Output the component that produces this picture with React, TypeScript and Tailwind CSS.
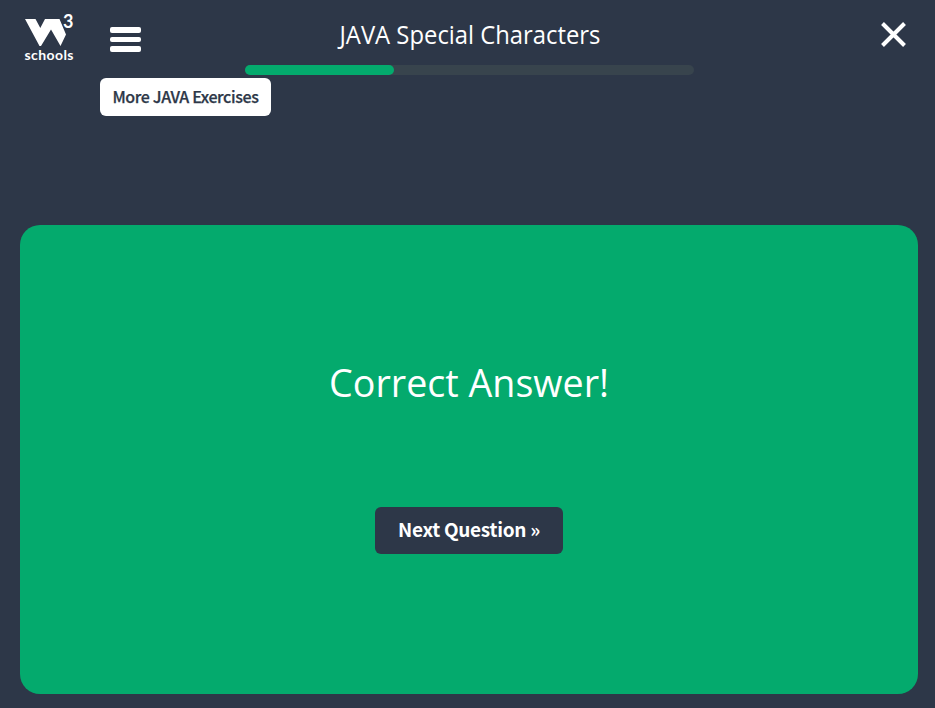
export default function App() {
  return (
    <main className="flex h-[708px] w-[935px] flex-col overflow-hidden bg-[#2d3748] text-white">
      <header className="flex h-[225px] items-start">
        <svg className="ml-[20px] mt-[10px] h-[55px] w-[60px] shrink-0" viewBox="20 10 60 55" fill="white">
          <path d="M25 19H35.5L40.3 28L45 19H59.5L66 34.5L60.5 46L51 29.5L41 46H39.5Z" />
          <text x="63" y="28" fontSize="18" fontWeight="700" fontFamily="Lato, sans-serif">3</text>
          <text x="24.5" y="60" fontSize="14" fontWeight="700" fontFamily="Lato, sans-serif" textLength="49">schools</text>
        </svg>
        <div className="mt-[27px] ml-[20px] flex w-[145px] shrink-0 flex-col">
          <button aria-label="Menu" className="ml-[10px] flex w-[31px] flex-col gap-[4px]">
            <span className="h-[5.5px] w-full rounded-[2px] bg-white" />
            <span className="h-[5.5px] w-full rounded-[2px] bg-white" />
            <span className="h-[5.5px] w-full rounded-[2px] bg-white" />
          </button>
          <a className="mt-[26.5px] flex h-[38px] w-[171px] shrink-0 items-center justify-center rounded-[6px] bg-white pb-[2px] font-['Noto_Sans_CJK_SC',sans-serif] text-[16px] font-medium tracking-[-0.37px] whitespace-nowrap text-[#2d3748] [-webkit-text-stroke:0.25px_#2d3748]">More JAVA Exercises</a>
        </div>
        <div className="flex w-[449px] shrink-0 flex-col items-center">
          <h1 className="mt-[16px] h-[49px] scale-x-[0.953] font-['Open_Sans',sans-serif] text-[25px] leading-[37px] whitespace-nowrap">JAVA Special Characters</h1>
          <div className="h-[10px] w-full rounded-[5px] bg-[#38444d]">
            <div className="h-full w-[149px] rounded-[5px] bg-[#04aa6d]" />
          </div>
        </div>
        <svg className="mt-[22px] ml-[187px] h-[25px] w-[25px]" viewBox="0 0 25 25" stroke="white" strokeWidth="4">
          <path d="M1.5 1.5L23.5 23.5M23.5 1.5L1.5 23.5" />
        </svg>
      </header>
      <section className="ml-[20px] flex h-[469px] w-[898px] flex-col items-center rounded-[20px] bg-[#04aa6d]">
        <h2 className="mt-[127px] h-[155px] scale-x-[0.965] font-['Open_Sans',sans-serif] text-[39px] leading-[60px] whitespace-nowrap">Correct Answer!</h2>
        <button className="h-[47px] w-[188px] rounded-[6px] bg-[#2d3748] pb-[2px] font-['Noto_Sans_CJK_SC',sans-serif] text-[19px] font-bold tracking-[-0.3px] whitespace-nowrap">Next Question »</button>
      </section>
    </main>
  );
}
